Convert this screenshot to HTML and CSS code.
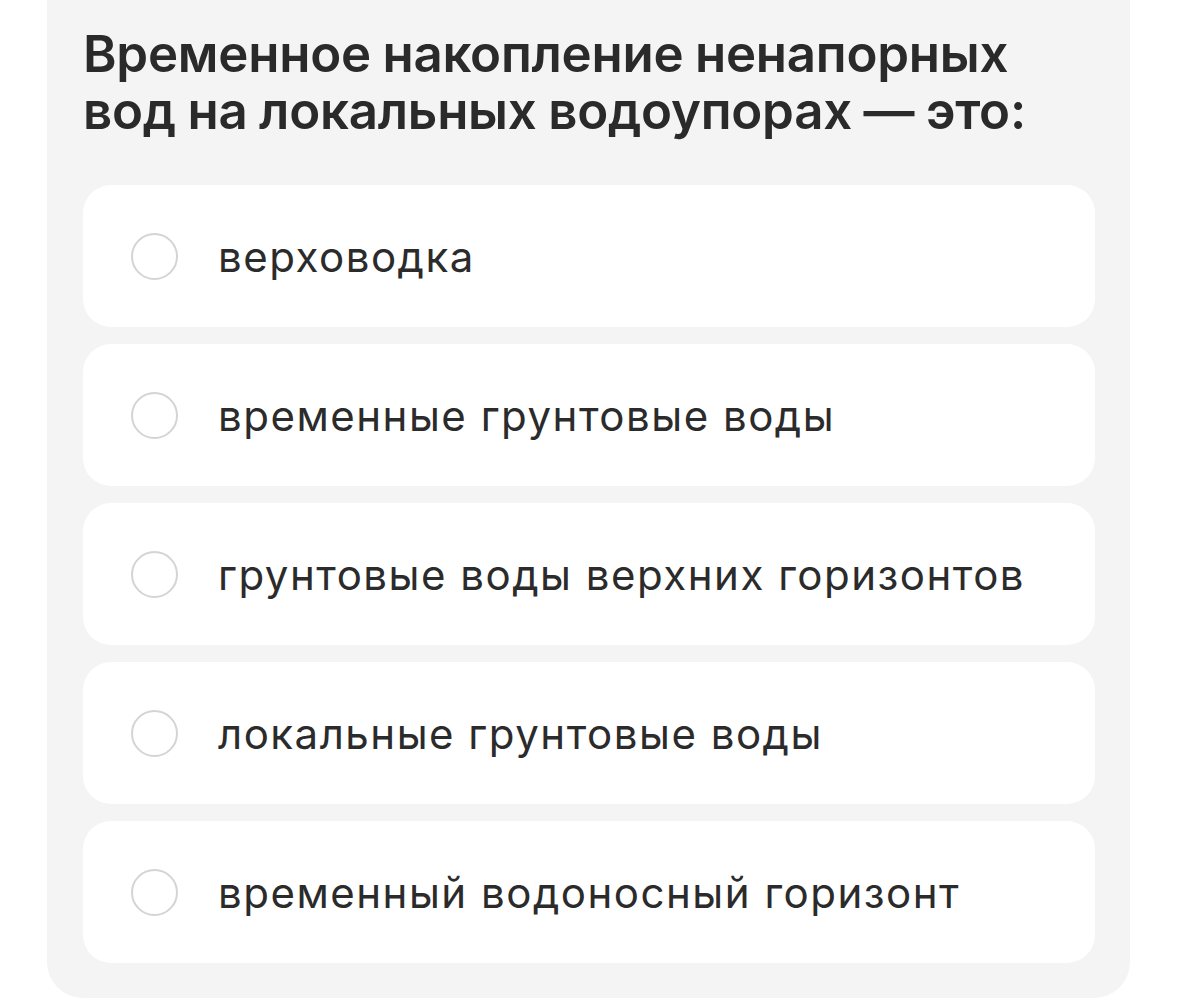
FILE: index.html
```html
<!DOCTYPE html>
<html lang="ru">
<head>
<meta charset="utf-8">
<link rel="stylesheet" href="styles.css">
</head>
<body>
<div class="card">
  <h1 class="question">Временное накопление ненапорных вод на локальных водоупорах — это:</h1>
  <div class="options">
    <label class="option"><span class="radio"></span><span class="text">верховодка</span></label>
    <label class="option"><span class="radio"></span><span class="text">временные грунтовые воды</span></label>
    <label class="option"><span class="radio"></span><span class="text">грунтовые воды верхних горизонтов</span></label>
    <label class="option"><span class="radio"></span><span class="text">локальные грунтовые воды</span></label>
    <label class="option"><span class="radio"></span><span class="text">временный водоносный горизонт</span></label>
  </div>
</div>
</body>
</html>
```

FILE: styles.css
```css
html, body {
  margin: 0;
  padding: 0;
  background: #ffffff;
}
body {
  font-family: Inter, "Noto Sans", sans-serif;
  color: #2a2a2a;
}
.card {
  margin-left: 47px;
  width: 1083px;
  box-sizing: border-box;
  background: #f4f4f4;
  border-radius: 0 0 36px 36px;
  padding: 25px 35px 35px 36px;
}
.question {
  margin: 0 0 46px 0;
  font-size: 51px;
  line-height: 57px;
  font-weight: 570;
  letter-spacing: -0.25px;
  word-spacing: -1px;
  color: #2a2a2a;
}
.options {
  display: flex;
  flex-direction: column;
  gap: 17px;
}
.option {
  display: flex;
  align-items: center;
  height: 142px;
  box-sizing: border-box;
  background: #ffffff;
  border-radius: 28px;
  padding-left: 48px;
}
.radio {
  width: 47px;
  height: 47px;
  box-sizing: border-box;
  border: 2.5px solid #d4d4d6;
  border-radius: 50%;
  flex: none;
}
.text {
  margin-left: 40px;
  font-size: 42px;
  font-weight: 400;
  letter-spacing: 1.5px;
  color: #2b2b2b;
}
```
